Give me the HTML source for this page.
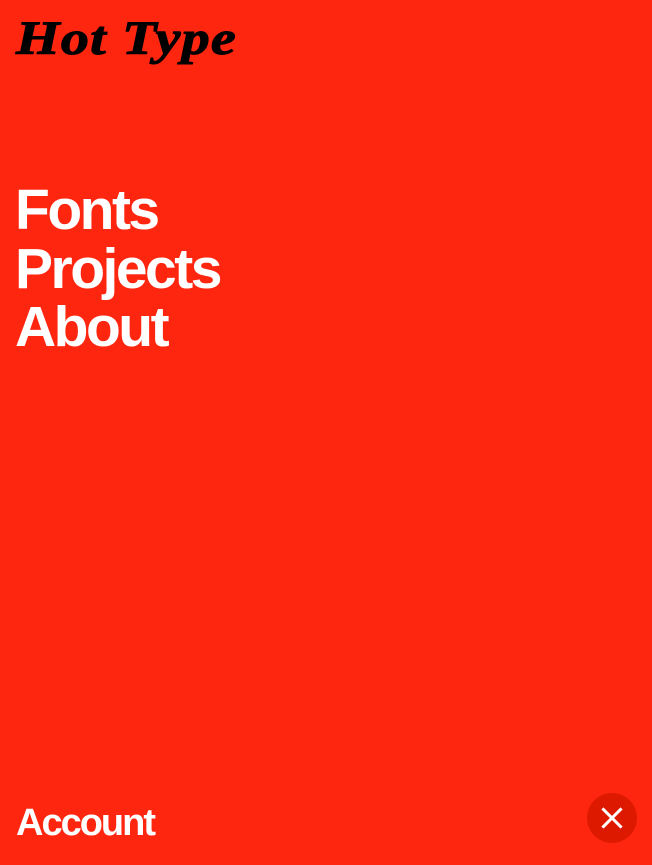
<!DOCTYPE html>
<html><head><style>
html,body{margin:0;padding:0;}
body{width:652px;height:865px;background:#ff2610;position:relative;overflow:hidden;font-family:"Liberation Sans",sans-serif;color:#fff;}
.logo{position:absolute;left:16px;top:15px;font-family:"Liberation Serif",serif;font-weight:bold;font-style:italic;font-size:48px;color:#000;letter-spacing:1px;-webkit-text-stroke:1px #000;transform:scaleX(1.17);transform-origin:left;line-height:1;}
.nav{position:absolute;left:15px;top:181px;font-weight:bold;font-size:57px;line-height:58.5px;letter-spacing:-2.5px;}
.acct{position:absolute;left:16px;top:800px;font-weight:bold;font-size:38px;letter-spacing:-2px;line-height:46px;}
.close{position:absolute;left:587px;top:793px;width:50px;height:50px;border-radius:50%;background:#dd1a00;}
</style></head><body>
<div class="logo">Hot Type</div>
<div class="nav">Fonts<br>Projects<br>About</div>
<div class="acct">Account</div>
<div class="close"><svg width="50" height="50" viewBox="0 0 50 50"><path d="M16.5 16.5L33.5 33.5M33.5 16.5L16.5 33.5" stroke="#fff" stroke-width="3" stroke-linecap="square"/></svg></div>
</body></html>
